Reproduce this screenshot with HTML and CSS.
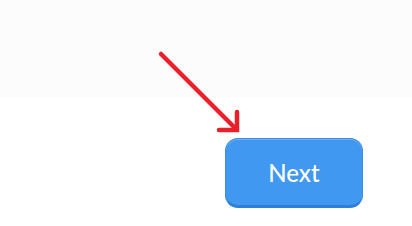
FILE: index.html
```html
<!DOCTYPE html>
<html lang="en">
<head>
    <meta charset="UTF-8">
    <meta name="viewport" content="width=device-width, initial-scale=1.0">
    <title>Next</title>
    <link rel="stylesheet" href="styles.css">
</head>
<body>
    <div class="screen">
        <div class="top-band"></div>
        <div class="actions">
            <button class="next-button">Next</button>
        </div>

        <!-- pointer arrow drawn over the page -->
        <svg class="hint-arrow" width="412" height="226" viewBox="0 0 412 226">
            <line x1="161" y1="54" x2="236" y2="129" stroke="#e8202a" stroke-width="4.5" stroke-linecap="round"/>
            <polyline points="237,112 237,130 219,130" fill="none" stroke="#e8202a" stroke-width="4.5" stroke-linecap="round" stroke-linejoin="miter"/>
        </svg>
    </div>
</body>
</html>
```

FILE: styles.css
```css
body {
    margin: 0;
    padding: 0;
    background: #ffffff;
    font-family: 'Lato', sans-serif;
}

.screen {
    position: relative;
    width: 412px;
    height: 226px;
    overflow: hidden;
}

.top-band {
    height: 97px;
    background: #fcfcfc;
}

.actions {
    display: flex;
    justify-content: flex-end;
    padding: 41px 49px 0 0;
}

.next-button {
    width: 138px;
    height: 70px;
    background: #4098f0;
    color: white;
    border: 1px solid #3a8ce4;
    border-bottom: 3px solid #2e7fd6;
    border-radius: 13px;
    box-shadow: inset 0 1px 0 rgba(255,255,255,0.25);
    font-family: 'Lato', sans-serif;
    font-size: 24px;
    font-weight: 500;
    padding: 0;
    cursor: pointer;
}

.hint-arrow {
    position: absolute;
    left: 0;
    top: 0;
    pointer-events: none;
}
```
